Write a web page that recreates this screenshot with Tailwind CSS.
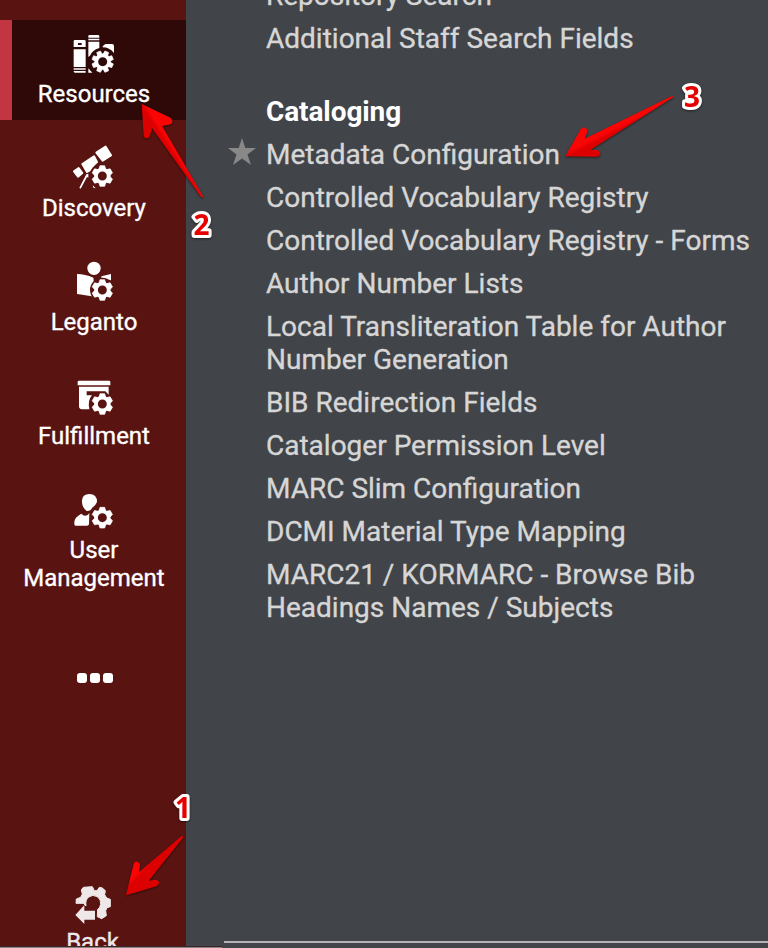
<!DOCTYPE html>
<html lang="en"><head><meta charset="utf-8"><title>Configuration menu</title>
<script src="https://cdn.jsdelivr.net/npm/@tailwindcss/browser@4"></script></head>
<body class="font-[Roboto,sans-serif]">
<svg class="absolute w-0 h-0"><defs>
<g id="gear8"><circle r="19" fill="none" stroke="currentColor" stroke-width="11"/>
<g stroke="currentColor" stroke-width="2" stroke-linejoin="round"><path id="teeth" d="M-7-22L-6-32H6L7-22ZM-7 22L-6 32H6L7 22ZM-22-7L-32-6V6L-22 7ZM22-7L32-6V6L22 7Z"/><use href="#teeth" transform="rotate(45)"/></g></g>
<g id="gear6"><circle r="19" fill="none" stroke="currentColor" stroke-width="11"/>
<g stroke="currentColor" stroke-width="2" stroke-linejoin="round"><path id="pair" d="M-10-21L-7-31H7L10-21ZM-10 21L-7 31H7L10 21Z"/><use href="#pair" transform="rotate(60)"/><use href="#pair" transform="rotate(120)"/></g></g>
</defs></svg>
<div class="relative flex w-[768px] h-[948px] overflow-hidden bg-[#414448]">
<nav class="w-[186px] h-full shrink-0 bg-[#591412] pt-5 flex flex-col gap-[14px] text-white text-[24px] leading-[28px] text-center [-webkit-text-stroke:0.35px_currentColor]">
<a class="block h-[100px] shrink-0 bg-[#2e0908] border-l-[12px] border-[#c23644] pt-[5px]">
<svg class="w-[70px] h-[55px] ml-[48px]" viewBox="0 0 210 165" fill="currentColor"><path d="M45 45H73Q77 45 77 49V66H41V49Q41 45 45 45ZM41 73H77V126H41ZM41 130H77V134H41ZM41 138H77V143H45Q41 143 41 139ZM88 30H114Q118 30 118 34V38H85V34Q85 30 88 30ZM85 41H118V46H85ZM85 50H118V69Q96 76 91 91L85 96ZM128 64L136 57H156Q162 57 162 63V84Q149 67 128 67ZM85 130L97 143H85Z"/><path fill="#2e0908" d="M54 54H65V60H54Z"/><use href="#gear8" transform="translate(128 110) rotate(22.5)"/></svg>
<span class="block -ml-[12px] pl-[2px]">Resources</span></a>
<a class="block h-[100px] shrink-0 pt-[5px]"><svg class="w-[70px] h-[55px] ml-[60px]" viewBox="0 -3 210 165" fill="currentColor"><path stroke="currentColor" stroke-width="6" stroke-linejoin="round" d="M109 38L137 20L153 46L128 62ZM67 72L102 49L111 66L102 74Q94 81 89 91L81 96ZM42 94L56 84L67 99L54 110Z"/><path d="M79 103L85 101V113L81 111L62 146L58 143ZM98 136L107 145L100 143Z"/><circle cx="127" cy="108" r="35" fill="#591412"/><use href="#gear6" transform="translate(127 108)"/></svg><span class="block pl-[2px]">Discovery</span></a>
<a class="block h-[100px] shrink-0 pt-[5px]"><svg class="w-[70px] h-[55px] ml-[60px]" viewBox="0 -6 210 165" fill="currentColor"><path d="M51 57Q75 57 100 68L108 127Q72 119 51 117ZM124 64L153 57V76H124Z"/><circle cx="102" cy="40" r="23" fill="#591412"/><circle cx="102" cy="40" r="20"/><circle cx="127" cy="105" r="37" fill="#591412"/><use href="#gear6" transform="translate(127 105)"/></svg><span class="block pl-[2px]">Leganto</span></a>
<a class="block h-[100px] shrink-0 pt-[5px]"><svg class="w-[70px] h-[55px] ml-[60px]" viewBox="0 -9 210 165" fill="currentColor"><path d="M57 32H147Q151 32 151 36V46H53V36Q53 32 57 32ZM57 50H146V74L136 64H80V76H96Q82 92 88 118H65Q57 117 57 109Z"/><use href="#gear6" transform="translate(127 102)"/></svg><span class="block pl-[2px]">Fulfillment</span></a>
<a class="block h-[128px] shrink-0 pt-[5px]"><svg class="w-[70px] h-[55px] ml-[60px]" viewBox="0 -12 210 165" fill="currentColor"><path d="M66 46Q68 27 88 27Q111 27 111 51Q108 60 96 69Q92 79 80 78Q65 66 66 46ZM43 118V112Q43 97 64 86Q79 100 88 84L87 118Q86 122 81 122H47Q43 122 43 118Z"/><use href="#gear6" transform="translate(127 98)"/></svg><span class="block pl-[2px]">User<br>Management</span></a>
<div class="flex gap-[3px] ml-[76.5px] mt-[55px] shrink-0"><i class="w-[10px] h-[10px] rounded-[3px] bg-white"></i><i class="w-[10px] h-[10px] rounded-[3px] bg-white"></i><i class="w-[10px] h-[10px] rounded-[3px] bg-white"></i></div>
<a class="block h-[72px] shrink-0 mt-[181px] text-[#eee8e8]"><svg class="w-[56px] h-[50px] ml-[66px]" viewBox="0 0 168 150" fill="currentColor"><path stroke="currentColor" stroke-width="3" stroke-linejoin="round" d="M65 27L52 28L46 36L49 48L44 58L31 63L30 76H52L60 84Q57 66 68 57Q80 48 94 56Q106 65 104 79Q102 90 95 94L94 116L107 122L121 113L119 98L123 89L133 86V64L122 60L116 50L118 38L109 30L100 28L93 38L85 38L79 26Z"/><path d="M28 111L55 81V98H87V125H55V138Z"/></svg><span class="block pr-[1px]">Back</span></a>
</nav>
<main class="pl-[80px] -mt-[21px] text-[#d6d6d6] text-[28px] leading-[33px] whitespace-nowrap [-webkit-text-stroke:0.35px_currentColor]">
<ul class="flex flex-col gap-[10px]"><li>Repository Search</li><li>Additional Staff Search Fields</li></ul>
<h2 class="mt-[40px] mb-[10px] font-bold text-white [-webkit-text-stroke:0] tracking-[-0.1px]">Cataloging</h2>
<ul class="flex flex-col gap-[10px]">
<li class="relative"><svg class="absolute -left-[38px] top-0 w-[28px] h-[28px]" viewBox="0 0 28 28" fill="#888"><path d="M14 0L17.300 10H28L19.500 16.500L23 27L14 20.500L5 27L8.500 16.500L0 10H10.700Z"/></svg>Metadata Configuration</li>
<li>Controlled Vocabulary Registry</li><li>Controlled Vocabulary Registry - Forms</li><li>Author Number Lists</li><li>Local Transliteration Table for Author<br>Number Generation</li><li>BIB Redirection Fields</li><li>Cataloger Permission Level</li><li>MARC Slim Configuration</li><li>DCMI Material Type Mapping</li><li>MARC21 / KORMARC - Browse Bib<br>Headings Names / Subjects</li></ul>
</main>
<div class="absolute left-[224px] right-0 top-[941px] h-[2px] bg-[#b5b3b6]"></div>
<div class="absolute left-0 w-[222px] top-[946px] h-[2px] bg-[#8a8484] border-t border-[#3c2424]"></div>
<svg class="absolute inset-0 w-[768px] h-[948px] drop-shadow-[0_1px_1px_rgba(0,0,0,0.5)]" viewBox="0 0 768 948">
<defs>
<linearGradient id="r1" gradientUnits="userSpaceOnUse" x1="430" y1="210" x2="490" y2="270"><stop offset=".42" stop-color="#fb0404"/><stop offset=".56" stop-color="#dd0000"/></linearGradient>
<linearGradient id="r2" gradientUnits="userSpaceOnUse" x1="540" y1="430" x2="490" y2="462"><stop offset=".42" stop-color="#fb0404"/><stop offset=".6" stop-color="#dd0000"/></linearGradient>
<linearGradient id="r3" gradientUnits="userSpaceOnUse" x1="220" y1="145" x2="250" y2="205"><stop offset=".42" stop-color="#fb0404"/><stop offset=".6" stop-color="#dd0000"/></linearGradient>
</defs>
<path fill="url(#r2)" transform="scale(.3333)" d="M425 312L508 352Q518 358 517 367Q514 375 504 374L486 378L610 590Q608 594 603 590L456 384L450 407Q446 416 439 415Q431 413 431 406Z"/>
<path fill="url(#r1)" transform="translate(0 780) scale(.3333)" d="M378 346L401 252Q404 244 412 245Q420 248 420 256L417 277L545 168Q550 167 549 173L446 302L466 299Q476 300 477 308Q477 316 469 319Z"/>
<path fill="url(#r3)" transform="translate(540 70) scale(.3333)" d="M76 259L122 178Q128 170 137 173Q144 177 142 185L134 206L396 78Q401 78 399 82L152 239L171 240Q181 242 181 250Q180 259 171 260Z"/>
<g font-family="Open Sans" font-weight="700" font-size="28" text-anchor="middle" fill="#e60000" stroke="#fff" stroke-width="6" stroke-linejoin="round" paint-order="stroke"><text x="183" y="818">1</text><text x="201.500" y="235">2</text><text x="692" y="106.500">3</text></g>
</svg>
</div></body></html>
